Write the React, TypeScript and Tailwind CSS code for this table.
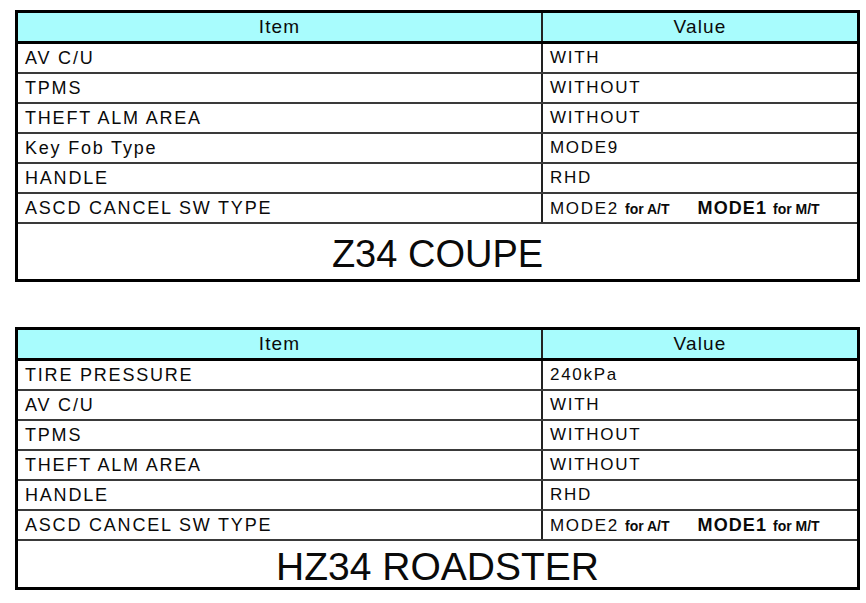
const coupeRows = [
  ["AV C/U", "WITH"],
  ["TPMS", "WITHOUT"],
  ["THEFT ALM AREA", "WITHOUT"],
  ["Key Fob Type", "MODE9"],
  ["HANDLE", "RHD"],
  ["ASCD CANCEL SW TYPE", "ascd"],
];

const roadsterRows = [
  ["TIRE PRESSURE", "240kPa"],
  ["AV C/U", "WITH"],
  ["TPMS", "WITHOUT"],
  ["THEFT ALM AREA", "WITHOUT"],
  ["HANDLE", "RHD"],
  ["ASCD CANCEL SW TYPE", "ascd"],
];

const AscdValue = () => (
  <span className="flex items-baseline">
    <span>MODE2</span>
    <span className="ml-[6px] text-[14px] font-bold tracking-normal">for A/T</span>
    <span className="ml-[28px] text-[18px] font-bold tracking-[0.06em]">MODE1</span>
    <span className="ml-[6px] text-[14px] font-bold tracking-normal">for M/T</span>
  </span>
);

const SpecTable = ({ rows, title, titleH, titleSize }: { rows: string[][]; title: string; titleH: string; titleSize: string }) => (
  <div className="w-[845px] border-[3px] border-black bg-white text-[#0a0a0a]">
    {/* Header */}
    <div className="flex h-[31px] border-b-[3px] border-black bg-[#a8fcfd] text-[19px] tracking-[0.06em]">
      <div className="flex w-[525px] items-center justify-center border-r-2 border-[#222]">Item</div>
      <div className="flex flex-1 items-center justify-center">Value</div>
    </div>

    {/* Rows */}
    {rows.map(([item, value]) => (
      <div key={item} className="flex h-[30px] border-b-2 border-[#3a3a3a]">
        <div className="flex w-[525px] items-center border-r-2 border-[#222] pl-[7px] text-[18px] tracking-[0.1em]">
          {item}
        </div>
        <div className="flex flex-1 items-center pl-[7px] text-[17px] tracking-[0.1em]">
          {value === "ascd" ? <AscdValue /> : value}
        </div>
      </div>
    ))}

    {/* Model title */}
    <div className={`flex items-center justify-center pt-[6px] ${titleH} ${titleSize}`}>{title}</div>
  </div>
);

export default function App() {
  return (
    <div className="min-h-screen bg-white pl-[15px] pt-[10px]" style={{ fontFamily: '"Liberation Sans", Arial, sans-serif' }}>
      <SpecTable rows={coupeRows} title="Z34 COUPE" titleH="h-[55px]" titleSize="text-[38px]" />
      <div className="mt-[45px]">
        <SpecTable rows={roadsterRows} title="HZ34 ROADSTER" titleH="h-[46px]" titleSize="text-[39px]" />
      </div>
    </div>
  );
}
